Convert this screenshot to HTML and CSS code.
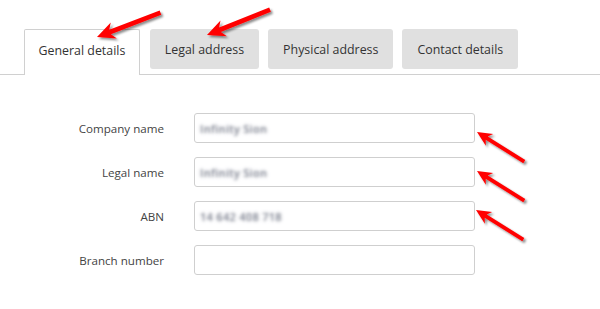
FILE: index.html
```html
<!DOCTYPE html>
<html lang="en">
<head>
    <meta charset="UTF-8">
    <meta name="viewport" content="width=device-width, initial-scale=1.0">
    <link rel="stylesheet" href="styles.css">
</head>
<body>

<div class="page">
    <div class="tabs">
        <div class="tab active">General details</div>
        <div class="tab">Legal address</div>
        <div class="tab">Physical address</div>
        <div class="tab">Contact details</div>
    </div>

    <div class="form">
        <div class="row">
            <label class="label">Company name</label>
            <div class="field"><span class="blurred">Infinity Sion</span></div>
        </div>
        <div class="row">
            <label class="label">Legal name</label>
            <div class="field"><span class="blurred">Infinity Sion</span></div>
        </div>
        <div class="row">
            <label class="label">ABN</label>
            <div class="field"><span class="blurred">14 642 408 718</span></div>
        </div>
        <div class="row">
            <label class="label">Branch number</label>
            <div class="field"></div>
        </div>
    </div>

    <!-- annotation arrows -->
    <svg class="arrows" width="600" height="309" viewBox="0 0 600 309">
        <defs>
            <filter id="shadow" x="-20%" y="-20%" width="140%" height="140%">
                <feDropShadow dx="2" dy="2" stdDeviation="1.2" flood-color="#000" flood-opacity="0.45"/>
            </filter>
            <g id="arrow">
                <!-- points right along +x, tip at 0,0 -->
                <path d="M0 0 L-18 -8.5 L-14 -2.3 L-68 -2.3 L-68 2.3 L-14 2.3 L-18 8.5 Z" fill="#f00"/>
            </g>
        </defs>
        <g filter="url(#shadow)">
            <use href="#arrow" transform="translate(97 37) rotate(159)"/>
            <use href="#arrow" transform="translate(207 35) rotate(158)"/>
            <use href="#arrow" transform="translate(477 132) rotate(212) scale(0.82)"/>
            <use href="#arrow" transform="translate(477 171) rotate(212) scale(0.82)"/>
            <use href="#arrow" transform="translate(476 210) rotate(212) scale(0.82)"/>
        </g>
    </svg>
</div>

</body>
</html>
```

FILE: styles.css
```css
body {
    margin: 0;
    padding: 0;
    font-family: "Open Sans", Arial, sans-serif;
    background-color: #fff;
    color: #333;
}

.page {
    position: relative;
    width: 600px;
    height: 309px;
    overflow: hidden;
}

.tabs {
    display: flex;
    align-items: flex-start;
    column-gap: 9px;
    padding: 29px 0 0 24px;
    border-bottom: 1px solid #d0d0d0;
    height: 45px;
}

.tab {
    height: 40px;
    line-height: 41px;
    padding: 0 15px;
    font-size: 12.4px;
    background-color: #e0e0e0;
    border-radius: 3px;
    color: #333;
}

.tab.active {
    height: 46px;
    line-height: 42px;
    padding: 0 13.5px;
    margin-right: 1px;
    box-sizing: border-box;
    background-color: #fff;
    border: 1px solid #d0d0d0;
    border-bottom: none;
    border-radius: 2px 2px 0 0;
    margin-bottom: -1px;
}

.form {
    display: flex;
    flex-direction: column;
    row-gap: 14px;
    padding-top: 38px;
}

.row {
    display: flex;
    align-items: center;
    column-gap: 30px;
}

.label {
    width: 164px;
    text-align: right;
    font-size: 11.6px;
    color: #444;
}

.field {
    width: 281px;
    height: 30px;
    box-sizing: border-box;
    border: 1px solid #cfcfcf;
    border-radius: 3px;
    padding: 0 5px;
    display: flex;
    align-items: center;
}

.blurred {
    font-size: 11px;
    font-weight: 600;
    color: transparent;
    text-shadow: 0 0 3.5px rgba(110, 115, 130, 1);
    letter-spacing: 0.3px;
}

.arrows {
    position: absolute;
    left: 0;
    top: 0;
    pointer-events: none;
}
```
